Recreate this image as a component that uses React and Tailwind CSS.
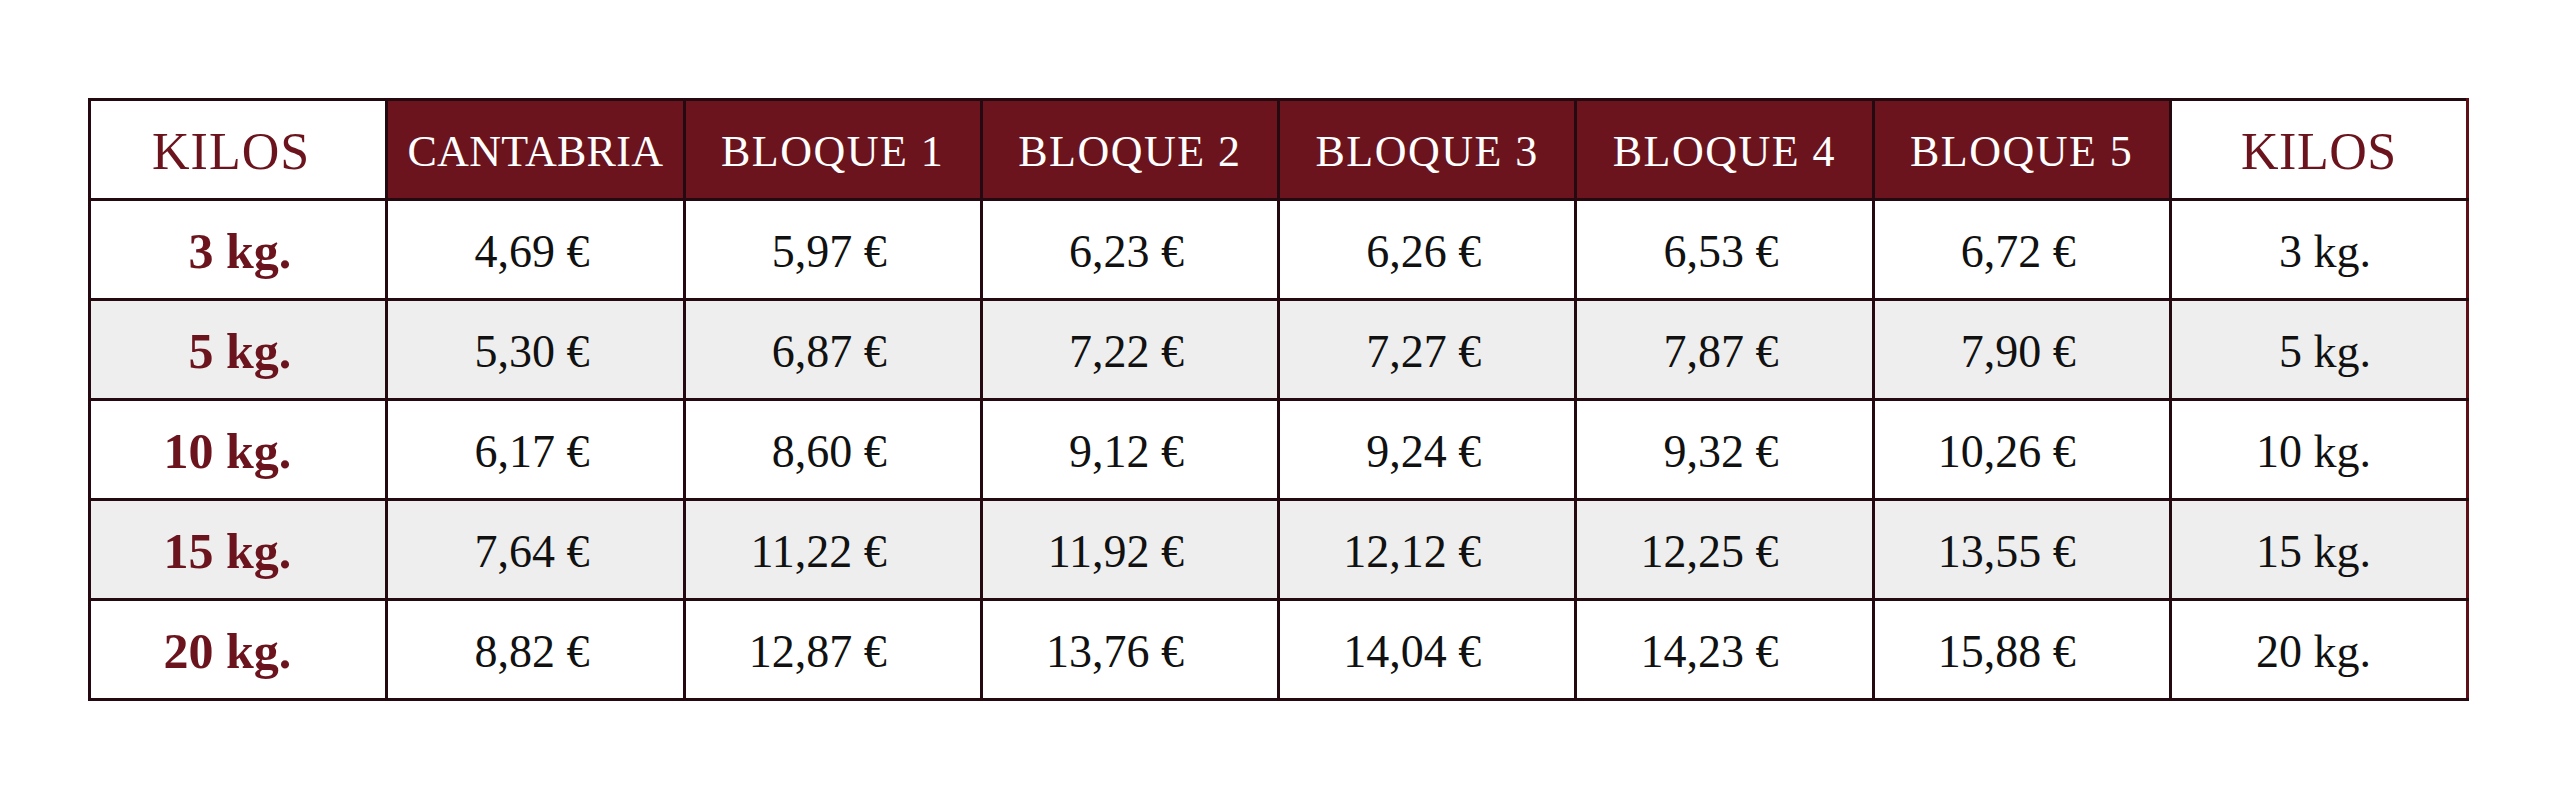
import React from 'react'

const columns = ['CANTABRIA', 'BLOQUE 1', 'BLOQUE 2', 'BLOQUE 3', 'BLOQUE 4', 'BLOQUE 5']

const rows = [
  { kg: '3', prices: ['4,69', '5,97', '6,23', '6,26', '6,53', '6,72'] },
  { kg: '5', prices: ['5,30', '6,87', '7,22', '7,27', '7,87', '7,90'] },
  { kg: '10', prices: ['6,17', '8,60', '9,12', '9,24', '9,32', '10,26'] },
  { kg: '15', prices: ['7,64', '11,22', '11,92', '12,12', '12,25', '13,55'] },
  { kg: '20', prices: ['8,82', '12,87', '13,76', '14,04', '14,23', '15,88'] },
]

const cell = 'border-[3px] border-[#250910] h-[100px] pt-[4px] pb-0 align-middle'

export default function App() {
  return (
    <div className="w-[2560px] h-[798px] bg-white pt-[98px] pl-[88px] font-['Liberation_Serif',_'Times_New_Roman',_serif]">
      <table className="table-fixed border-collapse w-[2381px]">
        <thead>
          <tr>
            <th className={`${cell} pr-[14px] bg-white text-[#6b141d] text-[52px] tracking-[1px] font-normal text-center`}>KILOS</th>
            {columns.map((c, i) => (
              <th
                key={c}
                className={`${cell} bg-[#6b141d] text-white text-[44px] font-normal text-center ${i === 0 ? 'tracking-[0.3px]' : 'tracking-[1.5px]'}`}
              >
                {c}
              </th>
            ))}
            <th className={`${cell} border-r-[#5e1019] bg-white text-[#6b141d] text-[52px] tracking-[0.5px] font-normal text-center`}>KILOS</th>
          </tr>
        </thead>
        <tbody>
          {rows.map((r, i) => (
            <tr key={r.kg} className={i % 2 === 1 ? 'bg-[#eeeeee]' : 'bg-white'}>
              <td className={`${cell} text-right pr-[94px] text-[#6b141d] text-[50px] font-bold`}>{r.kg} kg.</td>
              {r.prices.map((p, j) => (
                <td key={j} className={`${cell} text-right pr-[93px] text-[#111111] text-[46px]`}>{p} €</td>
              ))}
              <td className={`${cell} border-r-[#5e1019] text-right pr-[95px] text-[#111111] text-[46px]`}>{r.kg} kg.</td>
            </tr>
          ))}
        </tbody>
      </table>
    </div>
  )
}
